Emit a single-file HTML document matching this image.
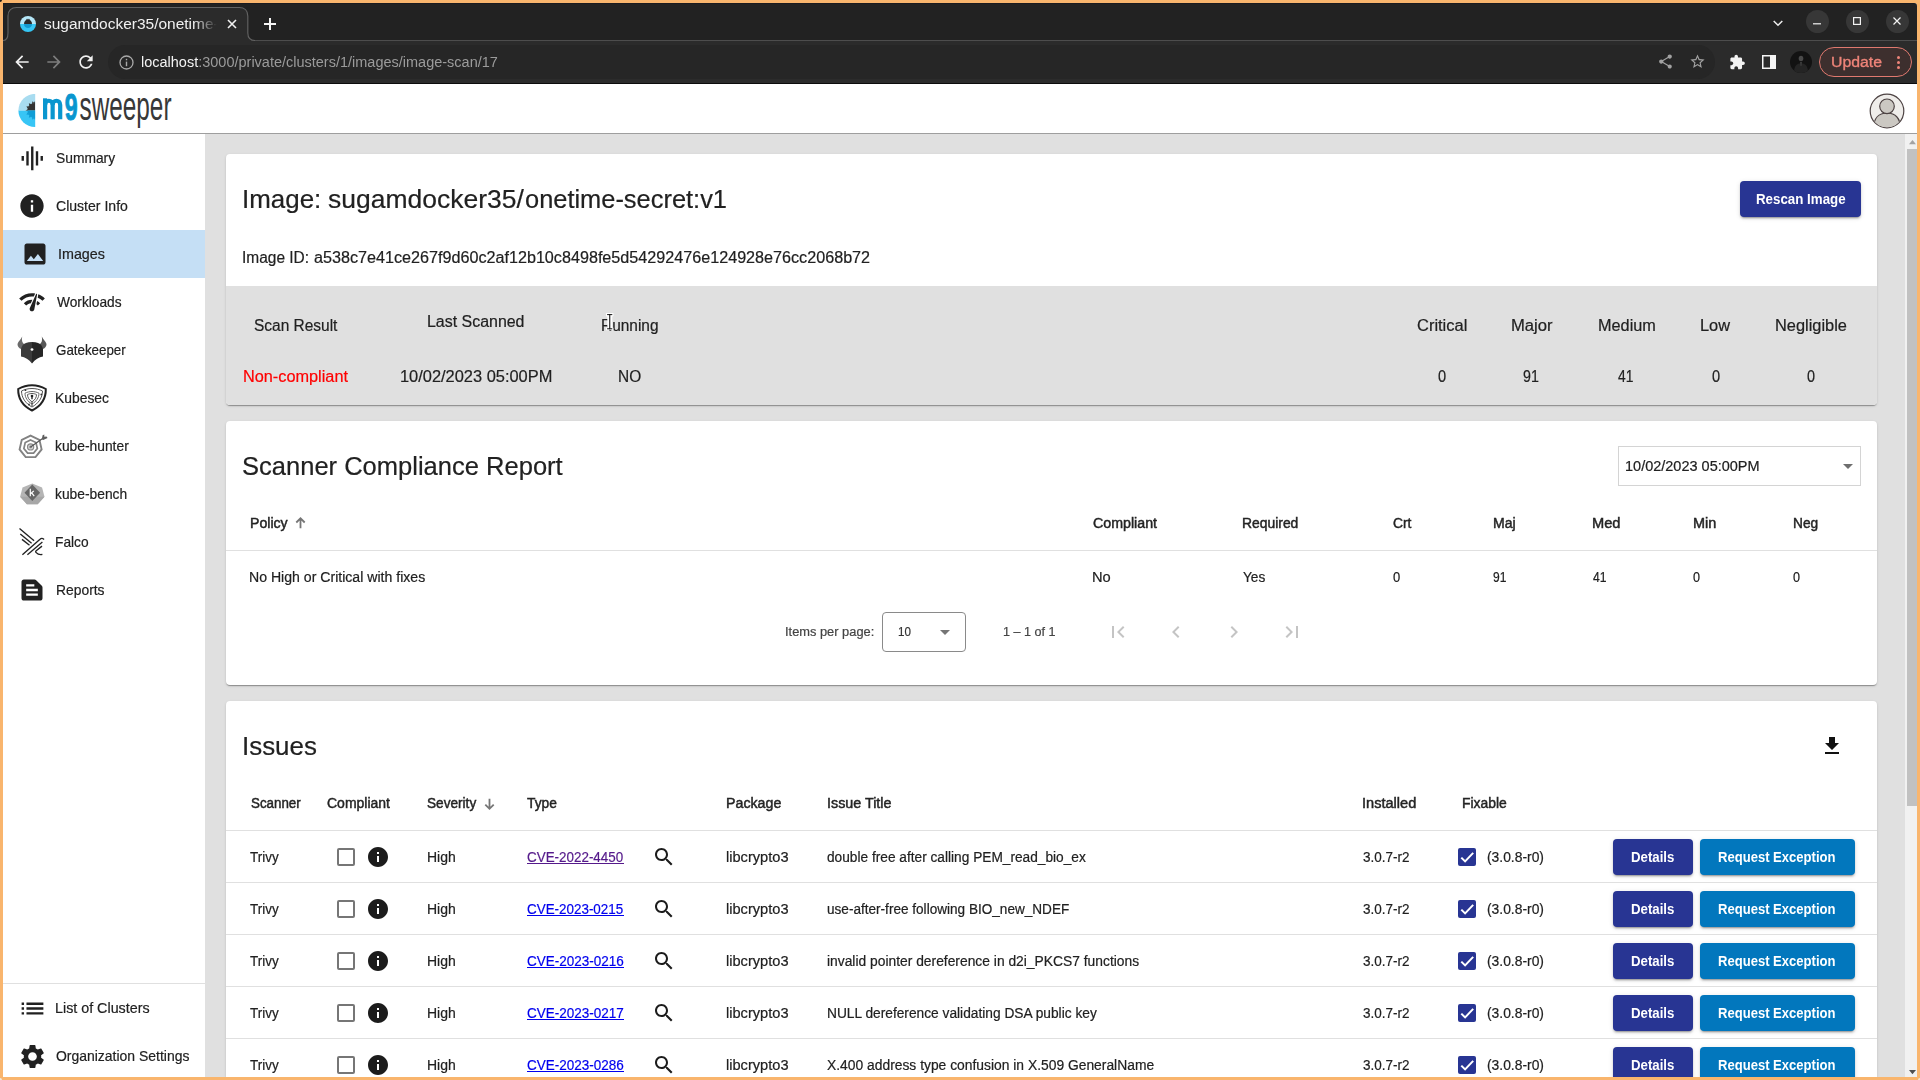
<!DOCTYPE html>
<html><head><meta charset="utf-8"><title>sugamdocker35/onetime-secret:v1</title><style>
html,body{margin:0;padding:0;width:1920px;height:1080px;overflow:hidden;background:#fff;font-family:"Liberation Sans",sans-serif;}
.b{position:absolute;box-sizing:border-box;}
.t{position:absolute;white-space:pre;font-family:"Liberation Sans",sans-serif;}
svg{overflow:visible;}
</style></head><body>
<div class="b" style="left:0px;top:0px;width:1920px;height:1080px;background:#f9b56d;"></div>
<div class="b" style="left:3px;top:3px;width:1914px;height:1074px;background:#fff;border-radius:0 3px 0 0;"></div>
<div class="b" style="left:0px;top:0px;width:2px;height:2px;background:#1a1a1a;border-radius:0 0 2px 0;"></div>
<div class="b" style="left:0px;top:1078px;width:2px;height:2px;background:#efe6dc;border-radius:0 2px 0 0;"></div>
<div class="b" style="left:1918px;top:1078px;width:2px;height:2px;background:#efe6dc;border-radius:2px 0 0 0;"></div>
<div class="b" style="left:3px;top:3px;width:1914px;height:38px;background:#222222;border-radius:0 3px 0 0;border-top:1px solid #1b1b1f;"></div>
<div class="b" style="left:3px;top:3px;width:1px;height:81px;background:#1d1d22;"></div>
<div class="b" style="left:3px;top:40px;width:1914px;height:44px;background:#2b2b2b;border-top:1px solid #4d4d4d;border-bottom:1px solid #0c0c0c;"></div>
<svg class="b" style="left:3px;top:7px;" width="253" height="36" viewBox="0 0 253 36"><path d="M0 34 C3.500 34 5.500 31 5.500 26 L5.500 9 C5.500 3.500 8.500 1 13.500 1 L236.300 1 C241.300 1 244.300 3.500 244.300 9 L244.300 26 C244.300 31 246.500 34 252 34 L252 35 L0 35 Z" fill="#2b2b2b"/>
<path d="M0 33.500 C3.500 33.500 5 30.500 5 26 L5 9 C5 3.500 8.500 .5 13.500 .5 L236.300 .5 C241.300 .5 244.800 3.500 244.800 9 L244.800 26 C244.800 30.500 246.500 33.500 252 33.500" fill="none" stroke="#636363" stroke-width="1.150"/></svg>
<svg class="b" style="left:20px;top:16px;" width="16" height="16" viewBox="0 0 16 16"><defs><clipPath id="fc"><circle cx="8" cy="8" r="8"/></clipPath></defs>
<g clip-path="url(#fc)"><rect width="16" height="8" fill="#b5e6f7"/><rect y="8" width="16" height="8" fill="#35c6f4"/>
<path d="M4 8 C4 5.500 5.500 4.200 6.500 4 L6 2.800 L7.300 3.600 L8 2.500 L8.700 3.600 L10 2.800 L9.500 4 C10.500 4.200 12 5.500 12 8 Z" fill="#2a2a2a"/>
<path d="M4 8 C4 10.500 6 12 8 12 C10 12 12 10.500 12 8 Z" fill="#159ad0"/></g></svg>
<span class="t" style="left:44.30px;top:16px;font-size:15.5px;line-height:15.5px;color:#f1f1f1;transform:scaleX(0.9988);transform-origin:0 0;width:174px;overflow:hidden;-webkit-mask-image:linear-gradient(90deg,#000 0,#000 150px,transparent 173px);mask-image:linear-gradient(90deg,#000 0,#000 150px,transparent 173px);">sugamdocker35/onetime-</span>
<svg class="b" style="left:227px;top:19px;" width="10" height="10" viewBox="0 0 10 10"><path d="M1 1 L9 9 M9 1 L1 9" stroke="#f1f1f1" stroke-width="1.600" fill="none"/></svg>
<svg class="b" style="left:264px;top:18px;" width="12" height="12" viewBox="0 0 12 12"><path d="M6 0 V12 M0 6 H12" stroke="#f5f5f5" stroke-width="2" fill="none"/></svg>
<svg class="b" style="left:1773px;top:20px;" width="10" height="7" viewBox="0 0 10 7"><path d="M.7 1 L5 5.300 L9.300 1" stroke="#eee" stroke-width="1.500" fill="none"/></svg>
<div class="b" style="left:1805.5px;top:9.7px;width:23px;height:23px;background:#373737;border-radius:50%;"></div>
<div class="b" style="left:1845.5px;top:9.7px;width:23px;height:23px;background:#373737;border-radius:50%;"></div>
<div class="b" style="left:1885.5px;top:9.7px;width:23px;height:23px;background:#373737;border-radius:50%;"></div>
<svg class="b" style="left:1813px;top:23px;" width="8" height="2" viewBox="0 0 8 2"><rect width="8" height="1.200" y=".2" fill="#f2f2f2"/></svg>
<svg class="b" style="left:1853px;top:17px;" width="8" height="8" viewBox="0 0 8 8"><rect x=".6" y=".6" width="6.800" height="6.800" fill="none" stroke="#f2f2f2" stroke-width="1.200"/></svg>
<svg class="b" style="left:1893px;top:17px;" width="8" height="8" viewBox="0 0 8 8"><path d="M.5 .5 L7.500 7.500 M7.500 .5 L.5 7.500" stroke="#f2f2f2" stroke-width="1.200" fill="none"/></svg>
<svg class="b" style="left:12px;top:52px;" width="20" height="20" viewBox="0 0 24 24"><path fill="#f1f1f1" d="M20 11H7.830l5.590-5.590L12 4l-8 8 8 8 1.410-1.410L7.830 13H20v-2z"/></svg>
<svg class="b" style="left:44px;top:52px;" width="20" height="20" viewBox="0 0 24 24"><path fill="#7d7d7d" d="M12 4l-1.410 1.410L16.170 11H4v2h12.170l-5.580 5.590L12 20l8-8z"/></svg>
<svg class="b" style="left:76px;top:52px;" width="20" height="20" viewBox="0 0 24 24"><path fill="#f1f1f1" d="M17.65 6.35C16.2 4.9 14.21 4 12 4c-4.420 0-7.990 3.580-7.990 8s3.570 8 7.990 8c3.730 0 6.840-2.550 7.730-6h-2.080c-.82 2.330-3.040 4-5.650 4-3.310 0-6-2.690-6-6s2.690-6 6-6c1.660 0 3.140.69 4.220 1.780L13 11h7V4l-2.350 2.350z"/></svg>
<div class="b" style="left:108px;top:45px;width:1607px;height:34px;background:#262626;border-radius:17px;"></div>
<svg class="b" style="left:118.5px;top:54.5px;" width="15" height="15" viewBox="0 0 15 15"><circle cx="7.500" cy="7.500" r="6.500" fill="none" stroke="#a9a9a9" stroke-width="1.300"/><rect x="6.800" y="6.600" width="1.400" height="4.600" fill="#a9a9a9"/><rect x="6.800" y="3.800" width="1.400" height="1.500" fill="#a9a9a9"/></svg>
<span class="t" style="left:141.30px;top:54px;font-size:15.5px;line-height:15.5px;color:#9b9b9b;transform:scaleX(0.9349);transform-origin:0 0;"><span style="color:#f4f4f4">localhost</span>:3000/private/clusters/1/images/image-scan/17</span>
<svg class="b" style="left:1656.8px;top:53px;" width="17" height="17" viewBox="0 0 24 24"><path fill="#a2a2a2" d="M18 16.08c-.76 0-1.440.3-1.960.77L8.910 12.700c.05-.23.09-.46.09-.7s-.04-.47-.09-.7l7.050-4.110c.54.5 1.250.81 2.040.81 1.660 0 3-1.340 3-3s-1.340-3-3-3-3 1.340-3 3c0 .24.04.47.09.7L8.040 9.810C7.500 9.310 6.790 9 6 9c-1.660 0-3 1.340-3 3s1.340 3 3 3c.79 0 1.500-.31 2.040-.81l7.120 4.160c-.05.21-.08.43-.08.65 0 1.610 1.310 2.920 2.920 2.920 1.610 0 2.920-1.310 2.920-2.920s-1.310-2.920-2.920-2.920z"/></svg>
<svg class="b" style="left:1688.5px;top:52.8px;" width="17" height="17" viewBox="0 0 24 24"><path fill="#a2a2a2" d="M22 9.24l-7.190-.62L12 2 9.190 8.630 2 9.240l5.460 4.730L5.820 21 12 17.270 18.180 21l-1.630-7.030L22 9.240zM12 15.400l-3.760 2.270 1-4.280-3.320-2.880 4.380-.38L12 6.100l1.710 4.040 4.380.38-3.320 2.880 1 4.280L12 15.400z"/></svg>
<svg class="b" style="left:1729.05px;top:54.15px;" width="16.5" height="16.5" viewBox="0 0 24 24"><path fill="#f3f3f3" d="M20.5 11H19V7c0-1.100-.9-2-2-2h-4V3.500C13 2.120 11.880 1 10.500 1S8 2.120 8 3.500V5H4c-1.100 0-1.990.9-1.990 2v3.800H3.500c1.490 0 2.700 1.210 2.700 2.700s-1.210 2.700-2.700 2.700H2V20c0 1.100.9 2 2 2h3.800v-1.500c0-1.490 1.210-2.700 2.700-2.700 1.490 0 2.700 1.210 2.700 2.700V22H17c1.100 0 2-.9 2-2v-4h1.500c1.380 0 2.500-1.120 2.500-2.500S21.880 11 20.500 11z"/></svg>
<svg class="b" style="left:1762px;top:55px;" width="14" height="14" viewBox="0 0 14 14"><rect x=".75" y=".75" width="12.500" height="12.500" fill="#2b2b2b" stroke="#f5f5f5" stroke-width="1.500"/><rect x="8" y="0" width="6" height="14" fill="#f5f5f5"/></svg>
<svg class="b" style="left:1790px;top:51px;" width="22" height="22" viewBox="0 0 22 22"><defs><clipPath id="ac"><circle cx="11" cy="11" r="11"/></clipPath></defs><g clip-path="url(#ac)"><rect width="22" height="22" fill="#121212"/>
<ellipse cx="11" cy="7.500" rx="2.300" ry="2.800" fill="#4a4a4a"/><path d="M4 22 C4 14 7 12.500 11 12.500 C15 12.500 18 14 18 22 Z" fill="#242424"/><path d="M10 11 L12 11 L11.500 15 L10.500 15 Z" fill="#3c3c3c"/></g></svg>
<div class="b" style="left:1819px;top:47px;width:93px;height:30px;background:#3d2f2e;border:1px solid #e0796f;border-radius:15px;"></div>
<span class="t" style="left:1831.30px;top:54px;font-size:15.5px;line-height:15.5px;color:#ee8479;transform:scaleX(1.0206);transform-origin:0 0;-webkit-text-stroke:0.35px #ee8479;">Update</span>
<div class="b" style="left:1896.8px;top:56px;width:3px;height:3px;background:#ee8479;border-radius:50%;"></div>
<div class="b" style="left:1896.8px;top:61px;width:3px;height:3px;background:#ee8479;border-radius:50%;"></div>
<div class="b" style="left:1896.8px;top:66px;width:3px;height:3px;background:#ee8479;border-radius:50%;"></div>
<div class="b" style="left:3px;top:84px;width:1914px;height:50px;background:#fff;border-bottom:1px solid #9e9e9e;"></div>
<svg class="b" style="left:18px;top:93.5px;" width="18" height="34" viewBox="0 0 18 34"><defs><clipPath id="lc"><circle cx="17" cy="16.500" r="16.600"/></clipPath><clipPath id="lh"><rect x="0" y="0" width="17.200" height="34"/></clipPath>
<clipPath id="lt"><rect x="0" y="0" width="17.200" height="16.600"/></clipPath><clipPath id="lb"><rect x="0" y="16.600" width="17.200" height="18"/></clipPath></defs>
<g clip-path="url(#lh)"><g clip-path="url(#lc)">
<rect x="0" y="0" width="18" height="16.600" fill="#a8dcf0"/>
<rect x="0" y="16.600" width="18" height="18" fill="#37c5f5"/>
</g>
<g clip-path="url(#lt)"><circle cx="17" cy="16.500" r="7.600" fill="#333"/><path d="M9.93 17.87 L7.40 16.50 L9.93 15.13 Z M10.01 14.76 L8.30 12.44 L11.18 12.27 Z M11.40 11.97 L10.83 9.15 L13.51 10.20 Z M13.84 10.03 L14.52 7.23 L16.50 9.32 Z M15.63 9.43 L17.00 6.90 L18.37 9.43 Z " fill="#333"/></g>
<g clip-path="url(#lb)"><circle cx="17" cy="16.500" r="7.600" fill="#0f9dd6"/><path d="M11.18 20.73 L8.30 20.56 L10.01 18.24 Z M13.51 22.80 L10.83 23.85 L11.40 21.03 Z M16.50 23.68 L14.52 25.77 L13.84 22.97 Z M18.37 23.57 L17.00 26.10 L15.63 23.57 Z " fill="#0f9dd6"/></g>
</g></svg>
<svg class="b" style="left:42.8px;top:86px;" width="130" height="48" viewBox="0 0 130 48"><g fill="none" stroke="#0996cf" stroke-width="4.200"><path d="M2.100 33.300 V12.300"/><path d="M2.100 19 C2.100 13.300 9.650 13.300 9.650 19 V33.300"/><path d="M9.650 19 C9.650 13.300 17.200 13.300 17.200 19 V33.300"/></g>
<text x="21.700" y="33.700" font-family="Liberation Sans, sans-serif" font-weight="700" font-size="36.500" fill="#0996cf" stroke="#0996cf" stroke-width=".9" textLength="12.900" lengthAdjust="spacingAndGlyphs">9</text>
<text x="36.500" y="33.600" font-family="Liberation Sans, sans-serif" font-size="39.800" fill="#383838" textLength="92" lengthAdjust="spacingAndGlyphs">sweeper</text></svg>
<svg class="b" style="left:1868.7px;top:92.65px;" width="36" height="36" viewBox="0 0 36 36"><circle cx="18" cy="18" r="16.800" fill="#efedea" stroke="#4d4343" stroke-width="1.200"/>
<defs><clipPath id="uc"><circle cx="18" cy="18" r="16.200"/></clipPath></defs>
<g clip-path="url(#uc)"><path d="M4.500 36 C4.500 25 10 20 18 20 C26 20 31.500 25 31.500 36 Z" fill="#cbc8c2" stroke="#4d4343" stroke-width="1.200"/>
<circle cx="18" cy="13.300" r="7.300" fill="#cbc8c2" stroke="#4d4343" stroke-width="1.200"/></g></svg>
<div class="b" style="left:205px;top:134px;width:1700px;height:943px;background:#e0e0e0;"></div>
<div class="b" style="left:3px;top:134px;width:202px;height:943px;background:#fff;"></div>
<div class="b" style="left:3px;top:230px;width:202px;height:48px;background:#c5dff5;"></div>
<div class="b" style="left:3px;top:983px;width:202px;height:1px;background:#e0e0e0;"></div>
<span class="t" style="left:56.11px;top:150px;font-size:15px;line-height:15px;color:#212121;transform:scaleX(0.9209);transform-origin:0 0;-webkit-text-stroke:0.2px #212121;">Summary</span>
<span class="t" style="left:55.57px;top:198px;font-size:15px;line-height:15px;color:#212121;transform:scaleX(0.9367);transform-origin:0 0;-webkit-text-stroke:0.2px #212121;">Cluster Info</span>
<span class="t" style="left:58.44px;top:246px;font-size:15px;line-height:15px;color:#212121;transform:scaleX(0.9539);transform-origin:0 0;-webkit-text-stroke:0.2px #212121;">Images</span>
<span class="t" style="left:56.70px;top:294px;font-size:15px;line-height:15px;color:#212121;transform:scaleX(0.9153);transform-origin:0 0;-webkit-text-stroke:0.2px #212121;">Workloads</span>
<span class="t" style="left:56.10px;top:342px;font-size:15px;line-height:15px;color:#212121;transform:scaleX(0.8893);transform-origin:0 0;-webkit-text-stroke:0.2px #212121;">Gatekeeper</span>
<span class="t" style="left:55.38px;top:390px;font-size:15px;line-height:15px;color:#212121;transform:scaleX(0.9253);transform-origin:0 0;-webkit-text-stroke:0.2px #212121;">Kubesec</span>
<span class="t" style="left:54.66px;top:438px;font-size:15px;line-height:15px;color:#212121;transform:scaleX(0.9210);transform-origin:0 0;-webkit-text-stroke:0.2px #212121;">kube-hunter</span>
<span class="t" style="left:54.66px;top:486px;font-size:15px;line-height:15px;color:#212121;transform:scaleX(0.9204);transform-origin:0 0;-webkit-text-stroke:0.2px #212121;">kube-bench</span>
<span class="t" style="left:55.38px;top:534px;font-size:15px;line-height:15px;color:#212121;transform:scaleX(0.9154);transform-origin:0 0;-webkit-text-stroke:0.2px #212121;">Falco</span>
<span class="t" style="left:55.66px;top:582px;font-size:15px;line-height:15px;color:#212121;transform:scaleX(0.9239);transform-origin:0 0;-webkit-text-stroke:0.2px #212121;">Reports</span>
<span class="t" style="left:55.48px;top:1000px;font-size:15px;line-height:15px;color:#212121;transform:scaleX(0.9533);transform-origin:0 0;-webkit-text-stroke:0.2px #212121;">List of Clusters</span>
<span class="t" style="left:55.81px;top:1048px;font-size:15px;line-height:15px;color:#212121;transform:scaleX(0.9300);transform-origin:0 0;-webkit-text-stroke:0.2px #212121;">Organization Settings</span>
<svg class="b" style="left:17.75px;top:143.75px;" width="28.5" height="28.5" viewBox="0 0 24 24"><path fill="#212121" d="M7 18h2V6H7v12zm4 4h2V2h-2v20zm-8-8h2v-4H3v4zm12 4h2V6h-2v12zm4-8v4h2v-4h-2z"/></svg>
<svg class="b" style="left:18px;top:192px;" width="28" height="28" viewBox="0 0 24 24"><path fill="#212121" d="M12 2C6.48 2 2 6.48 2 12s4.48 10 10 10 10-4.48 10-10S17.52 2 12 2zm1 15h-2v-6h2v6zm0-8h-2V7h2v2z"/></svg>
<svg class="b" style="left:21px;top:240px;" width="28" height="28" viewBox="0 0 24 24"><path fill="#212121" d="M21 19V5c0-1.1-.9-2-2-2H5c-1.1 0-2 .9-2 2v14c0 1.1.9 2 2 2h14c1.1 0 2-.9 2-2zM8.5 13.5l2.5 3.01L14.5 12l4.5 6H5l3.500-4.500z"/></svg>
<svg class="b" style="left:18px;top:288px;" width="28" height="28" viewBox="0 0 24 24"><path fill="#212121" d="M15.9 5c-.17 0-.32.09-.41.23l-.07.15-5.18 11.650c-.16.29-.26.61-.26.96 0 1.110.9 2.010 2.010 2.010.96 0 1.770-.68 1.960-1.590l.01-.03L16.400 5.500c0-.28-.22-.5-.5-.5zM1 9l2 2c2.880-2.880 6.790-4.080 10.530-3.620l1.190-2.680C9.890 3.840 4.740 5.270 1 9zm20 2l2-2c-1.640-1.640-3.550-2.820-5.590-3.570l-.53 2.820c1.500.62 2.900 1.530 4.120 2.750zm-4 4l2-2c-.8-.8-1.700-1.420-2.660-1.890l-.55 2.920c.42.27.83.59 1.210.97zM5 13l2 2c1.130-1.130 2.560-1.790 4.030-2l1.280-2.880c-2.630-.08-5.300.87-7.310 2.880z"/></svg>
<svg class="b" style="left:18px;top:576px;" width="28" height="28" viewBox="0 0 24 24"><path fill="#212121" d="M20.41 8.41l-4.830-4.830c-.37-.37-.88-.58-1.410-.58H5c-1.100 0-2 .9-2 2v14c0 1.100.9 2 2 2h14c1.100 0 2-.9 2-2V9.830c0-.53-.21-1.040-.59-1.420zM7 7h7v2H7V7zm10 10H7v-2h10v2zm0-4H7v-2h10v2z"/></svg>
<svg class="b" style="left:17.5px;top:993.5px;" width="29" height="29" viewBox="0 0 24 24"><path fill="#212121" d="M3 13h2v-2H3v2zm0 4h2v-2H3v2zm0-8h2V7H3v2zm4 4h14v-2H7v2zm0 4h14v-2H7v2zM7 7v2h14V7H7z"/></svg>
<svg class="b" style="left:17.5px;top:1041.5px;" width="29" height="29" viewBox="0 0 24 24"><path fill="#212121" d="M19.14 12.94c.04-.3.06-.61.06-.94 0-.32-.02-.64-.07-.94l2.03-1.58c.18-.14.23-.41.12-.61l-1.92-3.32c-.12-.22-.37-.29-.59-.22l-2.39.96c-.5-.38-1.03-.7-1.62-.94l-.36-2.54c-.04-.24-.24-.41-.48-.41h-3.84c-.24 0-.43.17-.47.41l-.36 2.54c-.59.24-1.13.57-1.62.94l-2.39-.96c-.22-.08-.47 0-.59.22L2.74 8.87c-.12.21-.08.47.12.61l2.03 1.58c-.05.3-.09.63-.09.94s.02.64.07.94l-2.03 1.58c-.18.14-.23.41-.12.61l1.920 3.320c.12.22.37.29.59.22l2.390-.96c.5.38 1.030.7 1.620.94l.36 2.540c.05.24.24.41.48.41h3.840c.24 0 .44-.17.47-.41l.36-2.540c.59-.24 1.130-.56 1.620-.94l2.390.96c.22.08.47 0 .59-.22l1.920-3.320c.12-.22.07-.47-.12-.61l-2.010-1.580zM12 15.600c-1.980 0-3.600-1.620-3.600-3.600s1.620-3.600 3.600-3.600 3.600 1.620 3.600 3.600-1.620 3.600-3.600 3.600z"/></svg>
<svg class="b" style="left:17px;top:336px;" width="30" height="28" viewBox="0 0 30 28"><path d="M5.200 0.500 C3.500 4 1.500 5 .5 8 C.3 10 2 12.500 4 13 L7.500 8.500 C5 7 4.500 4 5.200 0.500 Z" fill="#6a6a6a"/>
<path d="M24.800 0.500 C26.500 4 28.500 5 29.500 8 C29.700 10 28 12.500 26 13 L22.500 8.500 C25 7 25.500 4 24.800 0.500 Z" fill="#585858"/>
<path d="M15 6 C10 6 7 7.500 5.500 9.500 L4 12.500 L4 20.500 C8 21 12 23.500 15 27.500 Z" fill="#3b3b3b"/>
<path d="M15 6 C20 6 23 7.500 24.500 9.500 L26 12.500 L26 20.500 C22 21 18 23.500 15 27.500 Z" fill="#262626"/>
<ellipse cx="15" cy="13.500" rx="1.400" ry="1.200" fill="#fff"/></svg>
<svg class="b" style="left:17px;top:383.7px;" width="30" height="28" viewBox="0 0 30 28"><path d="M15 1.200 C20 1.200 25 2.800 28.800 5 C29 14 24 22 15 26.500 C6 22 1 14 1.200 5 C5 2.800 10 1.200 15 1.200 Z" fill="#fff" stroke="#222" stroke-width="2"/>
<path d="M15 4.500 C19 4.500 22.500 5.500 25.500 7 C25.500 13.500 21.500 19.500 15 23 C8.500 19.500 4.500 13.500 4.500 7 C7.500 5.500 11 4.500 15 4.500 Z" fill="none" stroke="#555" stroke-width="1"/>
<path d="M15 7.500 C17.500 7.500 20 8.200 22 9.200 C22 13.500 19.500 17.500 15 20 C10.500 17.500 8 13.500 8 9.200 C10 8.200 12.500 7.500 15 7.500 Z" fill="none" stroke="#666" stroke-width="1"/>
<path d="M15 9.500 C16.500 9.500 18.500 10 19.500 10.600 C19.500 13.500 18 16 15 17.800 C12 16 10.500 13.500 10.500 10.600 C11.500 10 13.500 9.500 15 9.500 Z" fill="#fff" stroke="#444" stroke-width=".9"/>
<circle cx="15" cy="12" r="1.300" fill="#222"/><rect x="14.300" y="12" width="1.400" height="3.300" rx=".6" fill="#222"/>
<circle cx="8.500" cy="6.200" r=".9" fill="#333"/><circle cx="24.300" cy="10.500" r=".9" fill="#333"/><circle cx="12" cy="20.500" r=".9" fill="#333"/>
<path d="M15 18 V22" stroke="#333" stroke-width="1"/></svg>
<svg class="b" style="left:17.7px;top:431.6px;" width="30" height="28" viewBox="0 0 30 28"><polygon points="12.60,3.60 21.43,7.85 23.62,17.41 17.50,25.08 7.70,25.08 1.58,17.41 3.77,7.85" fill="none" stroke="#828282" stroke-width="1.900"/><polygon points="12.60,8.00 17.99,10.60 19.33,16.44 15.59,21.12 9.61,21.12 5.87,16.44 7.21,10.60" fill="none" stroke="#828282" stroke-width="1.700"/><circle cx="12.600" cy="14.900" r="3.100" fill="#d6d6d6" stroke="#8a8a8a" stroke-width="1.200"/><circle cx="12.600" cy="14.900" r="1.300" fill="#808080"/><path d="M12.600 14.900 L26 5.500" stroke="#555" stroke-width="1.200"/><path d="M23.800 7.200 L24.600 3.200 L26.300 2.600 L26.300 4.800 L28.500 4.500 L29.600 6 L25.200 8 Z" fill="#5e5e5e"/></svg>
<svg class="b" style="left:19.7px;top:482.5px;" width="25" height="23" viewBox="0 0 25 23"><polygon points="12.30,0.40 22.07,4.54 24.49,13.85 17.72,21.31 6.88,21.31 0.11,13.85 2.53,4.54" fill="#b5b5b5"/><polygon points="24.49,13.85 17.72,21.31 6.88,21.31 0.11,13.85" fill="#a7a7a7"/><path d="M12.300 1.600 L20.100 9.700 L12.300 17.900 L4.500 9.700 Z" fill="#666"/><path d="M10.300 5.800 V13.200 M10.300 11 L13.800 7.900 M11.700 9.800 L14.200 13.200" stroke="#fff" stroke-width="1.200" fill="none"/></svg>
<svg class="b" style="left:0px;top:0px;" width="60" height="600" viewBox="0 0 60 600"><g stroke="#222" stroke-width="1.350" fill="none" stroke-linecap="butt">
<path d="M19.500 528.600 L34.100 540.700"/><path d="M20.300 534 L31.600 543.200"/><path d="M22 539.400 L29.500 545.300"/>
<path d="M22.400 554.700 L40 539.200 C41 538.200 42.500 538 44.100 539.400"/><path d="M27.400 554.700 L42.400 541.900"/>
<path d="M42 546.100 L36.200 550.700 C35.500 551.300 35.500 552 36.200 552.600 C37.500 554 39.500 555 42.400 554.400"/></g></svg>
<div class="b" style="left:1905px;top:134px;width:12px;height:943px;background:#f1f1f1;"></div>
<div class="b" style="left:1907px;top:149px;width:10px;height:657px;background:#c1c1c1;"></div>
<svg class="b" style="left:1909px;top:139.8px;" width="7" height="4.2" viewBox="0 0 7 4.2"><path d="M0 4.200 L3.500 0 L7 4.200 Z" fill="#a3a3a3"/></svg>
<svg class="b" style="left:1909px;top:1069.8px;" width="7" height="4.2" viewBox="0 0 7 4.2"><path d="M0 0 L3.500 4.200 L7 0 Z" fill="#505050"/></svg>
<div class="b" style="left:226px;top:154px;width:1651px;height:251px;background:#fff;border-radius:4px;box-shadow:0 2px 1px -1px rgba(0,0,0,.2),0 1px 1px 0 rgba(0,0,0,.14),0 1px 3px 0 rgba(0,0,0,.12);"></div>
<div class="b" style="left:226px;top:286px;width:1651px;height:119px;background:#e0e0e0;border-radius:0 0 4px 4px;"></div>
<span class="t" style="left:242.22px;top:186px;font-size:26px;line-height:26px;color:#212121;transform:scaleX(0.9971);transform-origin:0 0;-webkit-text-stroke:0.2px #212121;">Image:</span>
<span class="t" style="left:328.10px;top:186px;font-size:26px;line-height:26px;color:#212121;transform:scaleX(1.0189);transform-origin:0 0;-webkit-text-stroke:0.2px #212121;">sugamdocker35/</span>
<span class="t" style="left:525.20px;top:186px;font-size:26px;line-height:26px;color:#212121;transform:scaleX(0.9774);transform-origin:0 0;-webkit-text-stroke:0.2px #212121;">onetime-secret:v1</span>
<span class="t" style="left:242.29px;top:250px;font-size:16px;line-height:16px;color:#212121;transform:scaleX(0.9667);transform-origin:0 0;-webkit-text-stroke:0.2px #212121;">Image ID:</span>
<span class="t" style="left:313.90px;top:250px;font-size:16px;line-height:16px;color:#212121;transform:scaleX(1.0097);transform-origin:0 0;-webkit-text-stroke:0.2px #212121;">a538c7e41ce267f9d60c2af12b10c8498fe5d54292476e124928e76cc2068b72</span>
<div class="b" style="left:1740px;top:181px;width:121px;height:36px;background:#283593;border-radius:4px;box-shadow:0 3px 1px -2px rgba(0,0,0,.2),0 2px 2px 0 rgba(0,0,0,.14),0 1px 5px 0 rgba(0,0,0,.12);"></div>
<span class="t" style="left:1756.40px;top:191px;font-size:15px;line-height:15px;color:#fff;font-weight:700;transform:scaleX(0.8880);transform-origin:0 0;">Rescan Image</span>
<span class="t" style="left:254.30px;top:318px;font-size:16px;line-height:16px;color:#212121;transform:scaleX(0.9666);transform-origin:0 0;-webkit-text-stroke:0.2px #212121;">Scan Result</span>
<span class="t" style="left:427.26px;top:314px;font-size:16px;line-height:16px;color:#212121;transform:scaleX(0.9963);transform-origin:0 0;-webkit-text-stroke:0.2px #212121;">Last Scanned</span>
<span class="t" style="left:600.83px;top:318px;font-size:16px;line-height:16px;color:#212121;transform:scaleX(0.9643);transform-origin:0 0;-webkit-text-stroke:0.2px #212121;">Running</span>
<span class="t" style="left:1417.01px;top:318px;font-size:16px;line-height:16px;color:#212121;transform:scaleX(1.0296);transform-origin:0 0;-webkit-text-stroke:0.2px #212121;">Critical</span>
<span class="t" style="left:1511.21px;top:318px;font-size:16px;line-height:16px;color:#212121;transform:scaleX(1.0397);transform-origin:0 0;-webkit-text-stroke:0.2px #212121;">Major</span>
<span class="t" style="left:1597.76px;top:318px;font-size:16px;line-height:16px;color:#212121;transform:scaleX(1.0161);transform-origin:0 0;-webkit-text-stroke:0.2px #212121;">Medium</span>
<span class="t" style="left:1700.25px;top:318px;font-size:16px;line-height:16px;color:#212121;transform:scaleX(1.0221);transform-origin:0 0;-webkit-text-stroke:0.2px #212121;">Low</span>
<span class="t" style="left:1775.23px;top:318px;font-size:16px;line-height:16px;color:#212121;transform:scaleX(1.0229);transform-origin:0 0;-webkit-text-stroke:0.2px #212121;">Negligible</span>
<span class="t" style="left:243.00px;top:369px;font-size:16px;line-height:16px;color:#ff0000;transform:scaleX(1.0178);transform-origin:0 0;-webkit-text-stroke:0.2px #ff0000;">Non-compliant</span>
<span class="t" style="left:400.20px;top:369px;font-size:16px;line-height:16px;color:#212121;transform:scaleX(1.0253);transform-origin:0 0;-webkit-text-stroke:0.2px #212121;">10/02/2023 05:00PM</span>
<span class="t" style="left:618.48px;top:369px;font-size:16px;line-height:16px;color:#212121;transform:scaleX(0.9650);transform-origin:0 0;-webkit-text-stroke:0.2px #212121;">NO</span>
<span class="t" style="left:1437.90px;top:369px;font-size:16px;line-height:16px;color:#212121;transform:scaleX(0.9122);transform-origin:0 0;-webkit-text-stroke:0.2px #212121;">0</span>
<span class="t" style="left:1523.17px;top:369px;font-size:16px;line-height:16px;color:#212121;transform:scaleX(0.8892);transform-origin:0 0;-webkit-text-stroke:0.2px #212121;">91</span>
<span class="t" style="left:1618.10px;top:369px;font-size:16px;line-height:16px;color:#212121;transform:scaleX(0.8652);transform-origin:0 0;-webkit-text-stroke:0.2px #212121;">41</span>
<span class="t" style="left:1711.90px;top:369px;font-size:16px;line-height:16px;color:#212121;transform:scaleX(0.9122);transform-origin:0 0;-webkit-text-stroke:0.2px #212121;">0</span>
<span class="t" style="left:1807.30px;top:369px;font-size:16px;line-height:16px;color:#212121;transform:scaleX(0.9009);transform-origin:0 0;-webkit-text-stroke:0.2px #212121;">0</span>
<svg class="b" style="left:605.8px;top:312.9px;" width="7.4" height="17.3" viewBox="0 0 7.4 17.3"><g fill="#fff"><rect x="0" y="0" width="7.400" height="3.400" rx=".6"/><rect x="1.300" y="3" width="5" height="12" /><rect x="0" y="14.500" width="7.400" height="2.800" rx=".6"/></g><g fill="#151515"><rect x="1.100" y="1.100" width="5.200" height="1"/><rect x="3.200" y="1.100" width="1.100" height="15.200"/><rect x="1.100" y="15.300" width="5.200" height="1"/></g></svg>
<div class="b" style="left:226px;top:421px;width:1651px;height:264px;background:#fff;border-radius:4px;box-shadow:0 2px 1px -1px rgba(0,0,0,.2),0 1px 1px 0 rgba(0,0,0,.14),0 1px 3px 0 rgba(0,0,0,.12);"></div>
<span class="t" style="left:242.39px;top:453px;font-size:26px;line-height:26px;color:#212121;transform:scaleX(0.9819);transform-origin:0 0;-webkit-text-stroke:0.2px #212121;">Scanner Compliance Report</span>
<div class="b" style="left:1618px;top:446px;width:243px;height:40px;background:#fff;border:1px solid #d4d4d4;"></div>
<span class="t" style="left:1625.20px;top:459px;font-size:14px;line-height:14px;color:#212121;transform:scaleX(1.0355);transform-origin:0 0;-webkit-text-stroke:0.2px #212121;">10/02/2023 05:00PM</span>
<svg class="b" style="left:1843px;top:464px;" width="10" height="5" viewBox="0 0 10 5"><path d="M0 0 L5 5 L10 0 Z" fill="#6e6e6e"/></svg>
<span class="t" style="left:249.84px;top:516px;font-size:14px;line-height:14px;color:#242424;transform:scaleX(1.0084);transform-origin:0 0;-webkit-text-stroke:0.45px #242424;">Policy</span>
<svg class="b" style="left:294.5px;top:516.5px;" width="11" height="12" viewBox="0 0 11 12"><path d="M5.500 1.300 V11.300 M1.300 5.500 L5.500 1.300 L9.700 5.500" stroke="#767676" stroke-width="1.800" fill="none"/></svg>
<span class="t" style="left:1093.10px;top:516px;font-size:14px;line-height:14px;color:#242424;transform:scaleX(1.0153);transform-origin:0 0;-webkit-text-stroke:0.45px #242424;">Compliant</span>
<span class="t" style="left:1242.30px;top:516px;font-size:14px;line-height:14px;color:#242424;transform:scaleX(0.9915);transform-origin:0 0;-webkit-text-stroke:0.45px #242424;">Required</span>
<span class="t" style="left:1393.10px;top:516px;font-size:14px;line-height:14px;color:#242424;transform:scaleX(0.9863);transform-origin:0 0;-webkit-text-stroke:0.45px #242424;">Crt</span>
<span class="t" style="left:1493.40px;top:516px;font-size:14px;line-height:14px;color:#242424;transform:scaleX(1.0049);transform-origin:0 0;-webkit-text-stroke:0.45px #242424;">Maj</span>
<span class="t" style="left:1592.30px;top:516px;font-size:14px;line-height:14px;color:#242424;transform:scaleX(1.0466);transform-origin:0 0;-webkit-text-stroke:0.45px #242424;">Med</span>
<span class="t" style="left:1693.30px;top:516px;font-size:14px;line-height:14px;color:#242424;transform:scaleX(1.0330);transform-origin:0 0;-webkit-text-stroke:0.45px #242424;">Min</span>
<span class="t" style="left:1793.30px;top:516px;font-size:14px;line-height:14px;color:#242424;transform:scaleX(0.9786);transform-origin:0 0;-webkit-text-stroke:0.45px #242424;">Neg</span>
<div class="b" style="left:226px;top:550px;width:1651px;height:1px;background:#e0e0e0;"></div>
<span class="t" style="left:249.30px;top:570px;font-size:14px;line-height:14px;color:#212121;transform:scaleX(1.0065);transform-origin:0 0;-webkit-text-stroke:0.2px #212121;">No High or Critical with fixes</span>
<span class="t" style="left:1092.30px;top:570px;font-size:14px;line-height:14px;color:#212121;transform:scaleX(1.0466);transform-origin:0 0;-webkit-text-stroke:0.2px #212121;">No</span>
<span class="t" style="left:1243.10px;top:570px;font-size:14px;line-height:14px;color:#212121;transform:scaleX(0.9775);transform-origin:0 0;-webkit-text-stroke:0.2px #212121;">Yes</span>
<span class="t" style="left:1393.10px;top:570px;font-size:14px;line-height:14px;color:#212121;transform:scaleX(0.9266);transform-origin:0 0;-webkit-text-stroke:0.2px #212121;">0</span>
<span class="t" style="left:1493.10px;top:570px;font-size:14px;line-height:14px;color:#212121;transform:scaleX(0.8604);transform-origin:0 0;-webkit-text-stroke:0.2px #212121;">91</span>
<span class="t" style="left:1593.10px;top:570px;font-size:14px;line-height:14px;color:#212121;transform:scaleX(0.8668);transform-origin:0 0;-webkit-text-stroke:0.2px #212121;">41</span>
<span class="t" style="left:1693.00px;top:570px;font-size:14px;line-height:14px;color:#212121;transform:scaleX(0.9009);transform-origin:0 0;-webkit-text-stroke:0.2px #212121;">0</span>
<span class="t" style="left:1793.00px;top:570px;font-size:14px;line-height:14px;color:#212121;transform:scaleX(0.9009);transform-origin:0 0;-webkit-text-stroke:0.2px #212121;">0</span>
<span class="t" style="left:785.20px;top:626px;font-size:12px;line-height:12px;color:#444;transform:scaleX(1.0702);transform-origin:0 0;-webkit-text-stroke:0.2px #444;">Items per page:</span>
<div class="b" style="left:882px;top:612px;width:84px;height:40px;background:#fff;border:1px solid #8a8a8a;border-radius:4px;"></div>
<span class="t" style="left:898.19px;top:626px;font-size:12px;line-height:12px;color:#333;transform:scaleX(0.9668);transform-origin:0 0;-webkit-text-stroke:0.2px #333;">10</span>
<svg class="b" style="left:940px;top:630px;" width="10" height="5" viewBox="0 0 10 5"><path d="M0 0 L5 5 L10 0 Z" fill="#757575"/></svg>
<span class="t" style="left:1003.30px;top:626px;font-size:12px;line-height:12px;color:#444;transform:scaleX(1.0472);transform-origin:0 0;-webkit-text-stroke:0.2px #444;">1 – 1 of 1</span>
<svg class="b" style="left:1106px;top:619.5px;" width="24" height="24" viewBox="0 0 24 24"><path fill="#c4c4c4" d="M18.41 16.59L13.82 12l4.590-4.590L17 6l-6 6 6 6zM6 6h2v12H6z"/></svg>
<svg class="b" style="left:1164px;top:619.5px;" width="24" height="24" viewBox="0 0 24 24"><path fill="#c4c4c4" d="M15.41 7.41L14 6l-6 6 6 6 1.410-1.410L10.830 12z"/></svg>
<svg class="b" style="left:1222px;top:619.5px;" width="24" height="24" viewBox="0 0 24 24"><path fill="#c4c4c4" d="M10 6L8.590 7.410 13.170 12l-4.580 4.590L10 18l6-6z"/></svg>
<svg class="b" style="left:1280px;top:619.5px;" width="24" height="24" viewBox="0 0 24 24"><path fill="#c4c4c4" d="M5.59 7.41L10.18 12l-4.590 4.590L7 18l6-6-6-6zM16 6h2v12h-2z"/></svg>
<div class="b" style="left:226px;top:701px;width:1651px;height:376px;background:#fff;border-radius:4px 4px 0 0;box-shadow:0 2px 1px -1px rgba(0,0,0,.2),0 1px 1px 0 rgba(0,0,0,.14),0 1px 3px 0 rgba(0,0,0,.12);"></div>
<span class="t" style="left:242.48px;top:733px;font-size:26px;line-height:26px;color:#212121;transform:scaleX(0.9958);transform-origin:0 0;-webkit-text-stroke:0.2px #212121;">Issues</span>
<svg class="b" style="left:1820px;top:734px;" width="24" height="24" viewBox="0 0 24 24"><path fill="#111" d="M19 9h-4V3H9v6H5l7 7 7-7zM5 18v2h14v-2H5z"/></svg>
<span class="t" style="left:250.60px;top:796px;font-size:14px;line-height:14px;color:#242424;transform:scaleX(0.9541);transform-origin:0 0;-webkit-text-stroke:0.45px #242424;">Scanner</span>
<span class="t" style="left:326.60px;top:796px;font-size:14px;line-height:14px;color:#242424;transform:scaleX(0.9988);transform-origin:0 0;-webkit-text-stroke:0.45px #242424;">Compliant</span>
<span class="t" style="left:427.40px;top:796px;font-size:14px;line-height:14px;color:#242424;transform:scaleX(0.9728);transform-origin:0 0;-webkit-text-stroke:0.45px #242424;">Severity</span>
<svg class="b" style="left:483.5px;top:797.5px;" width="11" height="12" viewBox="0 0 11 12"><path d="M5.500 .8 V10.800 M1.300 6.600 L5.500 10.800 L9.700 6.600" stroke="#767676" stroke-width="1.800" fill="none"/></svg>
<span class="t" style="left:527.30px;top:796px;font-size:14px;line-height:14px;color:#242424;transform:scaleX(0.9820);transform-origin:0 0;-webkit-text-stroke:0.45px #242424;">Type</span>
<span class="t" style="left:726.48px;top:796px;font-size:14px;line-height:14px;color:#242424;transform:scaleX(1.0151);transform-origin:0 0;-webkit-text-stroke:0.45px #242424;">Package</span>
<span class="t" style="left:826.66px;top:796px;font-size:14px;line-height:14px;color:#242424;transform:scaleX(1.0223);transform-origin:0 0;-webkit-text-stroke:0.45px #242424;">Issue Title</span>
<span class="t" style="left:1362.30px;top:796px;font-size:14px;line-height:14px;color:#242424;transform:scaleX(1.0416);transform-origin:0 0;-webkit-text-stroke:0.45px #242424;">Installed</span>
<span class="t" style="left:1462.30px;top:796px;font-size:14px;line-height:14px;color:#242424;transform:scaleX(0.9922);transform-origin:0 0;-webkit-text-stroke:0.45px #242424;">Fixable</span>
<div class="b" style="left:226px;top:830px;width:1651px;height:1px;background:#e0e0e0;"></div>
<span class="t" style="left:250.30px;top:850px;font-size:14px;line-height:14px;color:#212121;transform:scaleX(0.9624);transform-origin:0 0;-webkit-text-stroke:0.2px #212121;">Trivy</span>
<div class="b" style="left:337px;top:848px;width:18px;height:18px;border:2px solid #767676;border-radius:2px;background:#fff;"></div>
<svg class="b" style="left:366px;top:845px;" width="24" height="24" viewBox="0 0 24 24"><path fill="#1c1c1c" d="M12 2C6.48 2 2 6.48 2 12s4.48 10 10 10 10-4.48 10-10S17.52 2 12 2zm1 15h-2v-6h2v6zm0-8h-2V7h2v2z"/></svg>
<span class="t" style="left:426.66px;top:850px;font-size:14px;line-height:14px;color:#212121;transform:scaleX(0.9977);transform-origin:0 0;-webkit-text-stroke:0.2px #212121;">High</span>
<span class="t" style="left:527.30px;top:850px;font-size:14px;line-height:14px;color:#551a8b;transform:scaleX(0.9580);transform-origin:0 0;-webkit-text-stroke:0.2px #551a8b;">CVE-2022-4450</span>
<div class="b" style="left:527px;top:863px;width:96.5px;height:1px;background:#551a8b;"></div>
<svg class="b" style="left:652.3px;top:845px;" width="24" height="24" viewBox="0 0 24 24"><path fill="#1c1c1c" d="M15.5 14h-.79l-.28-.27C15.41 12.59 16 11.11 16 9.5 16 5.91 13.09 3 9.5 3S3 5.910 3 9.5 5.910 16 9.5 16c1.610 0 3.090-.59 4.230-1.570l.27.28v.79l5 4.990L20.490 19l-4.990-5zm-6 0C7.010 14 5 11.990 5 9.5S7.010 5 9.5 5 14 7.010 14 9.5 11.990 14 9.5 14z"/></svg>
<span class="t" style="left:726.48px;top:850px;font-size:14px;line-height:14px;color:#212121;transform:scaleX(1.0431);transform-origin:0 0;-webkit-text-stroke:0.2px #212121;">libcrypto3</span>
<span class="t" style="left:827.30px;top:850px;font-size:14px;line-height:14px;color:#212121;transform:scaleX(0.9780);transform-origin:0 0;-webkit-text-stroke:0.2px #212121;">double free after calling PEM_read_bio_ex</span>
<span class="t" style="left:1363.10px;top:850px;font-size:14px;line-height:14px;color:#212121;transform:scaleX(0.9634);transform-origin:0 0;-webkit-text-stroke:0.2px #212121;">3.0.7-r2</span>
<div class="b" style="left:1458px;top:848px;width:18px;height:18px;background:#283593;border-radius:2px;"></div>
<svg class="b" style="left:1458px;top:848px;" width="18" height="18" viewBox="0 0 18 18"><path d="M3.300 9.600 L7.100 13.400 L15.200 4.900" stroke="#fff" stroke-width="2" fill="none"/></svg>
<span class="t" style="left:1487.40px;top:850px;font-size:14px;line-height:14px;color:#212121;transform:scaleX(0.9892);transform-origin:0 0;-webkit-text-stroke:0.2px #212121;">(3.0.8-r0)</span>
<div class="b" style="left:1613px;top:839px;width:80px;height:36px;background:#283593;border-radius:4px;box-shadow:0 3px 1px -2px rgba(0,0,0,.2),0 2px 2px 0 rgba(0,0,0,.14),0 1px 5px 0 rgba(0,0,0,.12);"></div>
<span class="t" style="left:1631.03px;top:849px;font-size:15px;line-height:15px;color:#fff;font-weight:700;transform:scaleX(0.8814);transform-origin:0 0;">Details</span>
<div class="b" style="left:1700px;top:839px;width:155px;height:36px;background:#0277bd;border-radius:4px;box-shadow:0 3px 1px -2px rgba(0,0,0,.2),0 2px 2px 0 rgba(0,0,0,.14),0 1px 5px 0 rgba(0,0,0,.12);"></div>
<span class="t" style="left:1718.48px;top:849px;font-size:15px;line-height:15px;color:#fff;font-weight:700;transform:scaleX(0.8701);transform-origin:0 0;">Request Exception</span>
<div class="b" style="left:226px;top:882px;width:1651px;height:1px;background:#e0e0e0;"></div>
<span class="t" style="left:250.30px;top:902px;font-size:14px;line-height:14px;color:#212121;transform:scaleX(0.9624);transform-origin:0 0;-webkit-text-stroke:0.2px #212121;">Trivy</span>
<div class="b" style="left:337px;top:900px;width:18px;height:18px;border:2px solid #767676;border-radius:2px;background:#fff;"></div>
<svg class="b" style="left:366px;top:897px;" width="24" height="24" viewBox="0 0 24 24"><path fill="#1c1c1c" d="M12 2C6.48 2 2 6.48 2 12s4.48 10 10 10 10-4.48 10-10S17.52 2 12 2zm1 15h-2v-6h2v6zm0-8h-2V7h2v2z"/></svg>
<span class="t" style="left:426.66px;top:902px;font-size:14px;line-height:14px;color:#212121;transform:scaleX(0.9977);transform-origin:0 0;-webkit-text-stroke:0.2px #212121;">High</span>
<span class="t" style="left:527.30px;top:902px;font-size:14px;line-height:14px;color:#0000ee;transform:scaleX(0.9580);transform-origin:0 0;-webkit-text-stroke:0.2px #0000ee;">CVE-2023-0215</span>
<div class="b" style="left:527px;top:915px;width:96.5px;height:1px;background:#0000ee;"></div>
<svg class="b" style="left:652.3px;top:897px;" width="24" height="24" viewBox="0 0 24 24"><path fill="#1c1c1c" d="M15.5 14h-.79l-.28-.27C15.41 12.59 16 11.11 16 9.5 16 5.91 13.09 3 9.5 3S3 5.910 3 9.5 5.910 16 9.5 16c1.610 0 3.090-.59 4.230-1.570l.27.28v.79l5 4.990L20.490 19l-4.990-5zm-6 0C7.010 14 5 11.990 5 9.5S7.010 5 9.5 5 14 7.010 14 9.5 11.990 14 9.5 14z"/></svg>
<span class="t" style="left:726.48px;top:902px;font-size:14px;line-height:14px;color:#212121;transform:scaleX(1.0431);transform-origin:0 0;-webkit-text-stroke:0.2px #212121;">libcrypto3</span>
<span class="t" style="left:827.30px;top:902px;font-size:14px;line-height:14px;color:#212121;transform:scaleX(0.9700);transform-origin:0 0;-webkit-text-stroke:0.2px #212121;">use-after-free following BIO_new_NDEF</span>
<span class="t" style="left:1363.10px;top:902px;font-size:14px;line-height:14px;color:#212121;transform:scaleX(0.9634);transform-origin:0 0;-webkit-text-stroke:0.2px #212121;">3.0.7-r2</span>
<div class="b" style="left:1458px;top:900px;width:18px;height:18px;background:#283593;border-radius:2px;"></div>
<svg class="b" style="left:1458px;top:900px;" width="18" height="18" viewBox="0 0 18 18"><path d="M3.300 9.600 L7.100 13.400 L15.200 4.900" stroke="#fff" stroke-width="2" fill="none"/></svg>
<span class="t" style="left:1487.40px;top:902px;font-size:14px;line-height:14px;color:#212121;transform:scaleX(0.9892);transform-origin:0 0;-webkit-text-stroke:0.2px #212121;">(3.0.8-r0)</span>
<div class="b" style="left:1613px;top:891px;width:80px;height:36px;background:#283593;border-radius:4px;box-shadow:0 3px 1px -2px rgba(0,0,0,.2),0 2px 2px 0 rgba(0,0,0,.14),0 1px 5px 0 rgba(0,0,0,.12);"></div>
<span class="t" style="left:1631.03px;top:901px;font-size:15px;line-height:15px;color:#fff;font-weight:700;transform:scaleX(0.8814);transform-origin:0 0;">Details</span>
<div class="b" style="left:1700px;top:891px;width:155px;height:36px;background:#0277bd;border-radius:4px;box-shadow:0 3px 1px -2px rgba(0,0,0,.2),0 2px 2px 0 rgba(0,0,0,.14),0 1px 5px 0 rgba(0,0,0,.12);"></div>
<span class="t" style="left:1718.48px;top:901px;font-size:15px;line-height:15px;color:#fff;font-weight:700;transform:scaleX(0.8701);transform-origin:0 0;">Request Exception</span>
<div class="b" style="left:226px;top:934px;width:1651px;height:1px;background:#e0e0e0;"></div>
<span class="t" style="left:250.30px;top:954px;font-size:14px;line-height:14px;color:#212121;transform:scaleX(0.9624);transform-origin:0 0;-webkit-text-stroke:0.2px #212121;">Trivy</span>
<div class="b" style="left:337px;top:952px;width:18px;height:18px;border:2px solid #767676;border-radius:2px;background:#fff;"></div>
<svg class="b" style="left:366px;top:949px;" width="24" height="24" viewBox="0 0 24 24"><path fill="#1c1c1c" d="M12 2C6.48 2 2 6.48 2 12s4.48 10 10 10 10-4.48 10-10S17.52 2 12 2zm1 15h-2v-6h2v6zm0-8h-2V7h2v2z"/></svg>
<span class="t" style="left:426.66px;top:954px;font-size:14px;line-height:14px;color:#212121;transform:scaleX(0.9977);transform-origin:0 0;-webkit-text-stroke:0.2px #212121;">High</span>
<span class="t" style="left:527.30px;top:954px;font-size:14px;line-height:14px;color:#0000ee;transform:scaleX(0.9642);transform-origin:0 0;-webkit-text-stroke:0.2px #0000ee;">CVE-2023-0216</span>
<div class="b" style="left:527px;top:967px;width:96.5px;height:1px;background:#0000ee;"></div>
<svg class="b" style="left:652.3px;top:949px;" width="24" height="24" viewBox="0 0 24 24"><path fill="#1c1c1c" d="M15.5 14h-.79l-.28-.27C15.41 12.59 16 11.11 16 9.5 16 5.91 13.09 3 9.5 3S3 5.910 3 9.5 5.910 16 9.5 16c1.610 0 3.090-.59 4.230-1.570l.27.28v.79l5 4.990L20.490 19l-4.990-5zm-6 0C7.010 14 5 11.990 5 9.5S7.010 5 9.5 5 14 7.010 14 9.5 11.990 14 9.5 14z"/></svg>
<span class="t" style="left:726.48px;top:954px;font-size:14px;line-height:14px;color:#212121;transform:scaleX(1.0431);transform-origin:0 0;-webkit-text-stroke:0.2px #212121;">libcrypto3</span>
<span class="t" style="left:827.30px;top:954px;font-size:14px;line-height:14px;color:#212121;transform:scaleX(0.9877);transform-origin:0 0;-webkit-text-stroke:0.2px #212121;">invalid pointer dereference in d2i_PKCS7 functions</span>
<span class="t" style="left:1363.10px;top:954px;font-size:14px;line-height:14px;color:#212121;transform:scaleX(0.9634);transform-origin:0 0;-webkit-text-stroke:0.2px #212121;">3.0.7-r2</span>
<div class="b" style="left:1458px;top:952px;width:18px;height:18px;background:#283593;border-radius:2px;"></div>
<svg class="b" style="left:1458px;top:952px;" width="18" height="18" viewBox="0 0 18 18"><path d="M3.300 9.600 L7.100 13.400 L15.200 4.900" stroke="#fff" stroke-width="2" fill="none"/></svg>
<span class="t" style="left:1487.40px;top:954px;font-size:14px;line-height:14px;color:#212121;transform:scaleX(0.9892);transform-origin:0 0;-webkit-text-stroke:0.2px #212121;">(3.0.8-r0)</span>
<div class="b" style="left:1613px;top:943px;width:80px;height:36px;background:#283593;border-radius:4px;box-shadow:0 3px 1px -2px rgba(0,0,0,.2),0 2px 2px 0 rgba(0,0,0,.14),0 1px 5px 0 rgba(0,0,0,.12);"></div>
<span class="t" style="left:1631.03px;top:953px;font-size:15px;line-height:15px;color:#fff;font-weight:700;transform:scaleX(0.8814);transform-origin:0 0;">Details</span>
<div class="b" style="left:1700px;top:943px;width:155px;height:36px;background:#0277bd;border-radius:4px;box-shadow:0 3px 1px -2px rgba(0,0,0,.2),0 2px 2px 0 rgba(0,0,0,.14),0 1px 5px 0 rgba(0,0,0,.12);"></div>
<span class="t" style="left:1718.48px;top:953px;font-size:15px;line-height:15px;color:#fff;font-weight:700;transform:scaleX(0.8701);transform-origin:0 0;">Request Exception</span>
<div class="b" style="left:226px;top:986px;width:1651px;height:1px;background:#e0e0e0;"></div>
<span class="t" style="left:250.30px;top:1006px;font-size:14px;line-height:14px;color:#212121;transform:scaleX(0.9624);transform-origin:0 0;-webkit-text-stroke:0.2px #212121;">Trivy</span>
<div class="b" style="left:337px;top:1004px;width:18px;height:18px;border:2px solid #767676;border-radius:2px;background:#fff;"></div>
<svg class="b" style="left:366px;top:1001px;" width="24" height="24" viewBox="0 0 24 24"><path fill="#1c1c1c" d="M12 2C6.48 2 2 6.48 2 12s4.48 10 10 10 10-4.48 10-10S17.52 2 12 2zm1 15h-2v-6h2v6zm0-8h-2V7h2v2z"/></svg>
<span class="t" style="left:426.66px;top:1006px;font-size:14px;line-height:14px;color:#212121;transform:scaleX(0.9977);transform-origin:0 0;-webkit-text-stroke:0.2px #212121;">High</span>
<span class="t" style="left:527.30px;top:1006px;font-size:14px;line-height:14px;color:#0000ee;transform:scaleX(0.9646);transform-origin:0 0;-webkit-text-stroke:0.2px #0000ee;">CVE-2023-0217</span>
<div class="b" style="left:527px;top:1019px;width:96.5px;height:1px;background:#0000ee;"></div>
<svg class="b" style="left:652.3px;top:1001px;" width="24" height="24" viewBox="0 0 24 24"><path fill="#1c1c1c" d="M15.5 14h-.79l-.28-.27C15.41 12.59 16 11.11 16 9.5 16 5.91 13.09 3 9.5 3S3 5.910 3 9.5 5.910 16 9.5 16c1.610 0 3.090-.59 4.230-1.570l.27.28v.79l5 4.990L20.490 19l-4.990-5zm-6 0C7.010 14 5 11.990 5 9.5S7.010 5 9.5 5 14 7.010 14 9.5 11.990 14 9.5 14z"/></svg>
<span class="t" style="left:726.48px;top:1006px;font-size:14px;line-height:14px;color:#212121;transform:scaleX(1.0431);transform-origin:0 0;-webkit-text-stroke:0.2px #212121;">libcrypto3</span>
<span class="t" style="left:827.30px;top:1006px;font-size:14px;line-height:14px;color:#212121;transform:scaleX(0.9811);transform-origin:0 0;-webkit-text-stroke:0.2px #212121;">NULL dereference validating DSA public key</span>
<span class="t" style="left:1363.10px;top:1006px;font-size:14px;line-height:14px;color:#212121;transform:scaleX(0.9634);transform-origin:0 0;-webkit-text-stroke:0.2px #212121;">3.0.7-r2</span>
<div class="b" style="left:1458px;top:1004px;width:18px;height:18px;background:#283593;border-radius:2px;"></div>
<svg class="b" style="left:1458px;top:1004px;" width="18" height="18" viewBox="0 0 18 18"><path d="M3.300 9.600 L7.100 13.400 L15.200 4.900" stroke="#fff" stroke-width="2" fill="none"/></svg>
<span class="t" style="left:1487.40px;top:1006px;font-size:14px;line-height:14px;color:#212121;transform:scaleX(0.9892);transform-origin:0 0;-webkit-text-stroke:0.2px #212121;">(3.0.8-r0)</span>
<div class="b" style="left:1613px;top:995px;width:80px;height:36px;background:#283593;border-radius:4px;box-shadow:0 3px 1px -2px rgba(0,0,0,.2),0 2px 2px 0 rgba(0,0,0,.14),0 1px 5px 0 rgba(0,0,0,.12);"></div>
<span class="t" style="left:1631.03px;top:1005px;font-size:15px;line-height:15px;color:#fff;font-weight:700;transform:scaleX(0.8814);transform-origin:0 0;">Details</span>
<div class="b" style="left:1700px;top:995px;width:155px;height:36px;background:#0277bd;border-radius:4px;box-shadow:0 3px 1px -2px rgba(0,0,0,.2),0 2px 2px 0 rgba(0,0,0,.14),0 1px 5px 0 rgba(0,0,0,.12);"></div>
<span class="t" style="left:1718.48px;top:1005px;font-size:15px;line-height:15px;color:#fff;font-weight:700;transform:scaleX(0.8701);transform-origin:0 0;">Request Exception</span>
<div class="b" style="left:226px;top:1038px;width:1651px;height:1px;background:#e0e0e0;"></div>
<span class="t" style="left:250.30px;top:1058px;font-size:14px;line-height:14px;color:#212121;transform:scaleX(0.9624);transform-origin:0 0;-webkit-text-stroke:0.2px #212121;">Trivy</span>
<div class="b" style="left:337px;top:1056px;width:18px;height:18px;border:2px solid #767676;border-radius:2px;background:#fff;"></div>
<svg class="b" style="left:366px;top:1053px;" width="24" height="24" viewBox="0 0 24 24"><path fill="#1c1c1c" d="M12 2C6.48 2 2 6.48 2 12s4.48 10 10 10 10-4.48 10-10S17.52 2 12 2zm1 15h-2v-6h2v6zm0-8h-2V7h2v2z"/></svg>
<span class="t" style="left:426.66px;top:1058px;font-size:14px;line-height:14px;color:#212121;transform:scaleX(0.9977);transform-origin:0 0;-webkit-text-stroke:0.2px #212121;">High</span>
<span class="t" style="left:527.30px;top:1058px;font-size:14px;line-height:14px;color:#0000ee;transform:scaleX(0.9642);transform-origin:0 0;-webkit-text-stroke:0.2px #0000ee;">CVE-2023-0286</span>
<div class="b" style="left:527px;top:1071px;width:96.5px;height:1px;background:#0000ee;"></div>
<svg class="b" style="left:652.3px;top:1053px;" width="24" height="24" viewBox="0 0 24 24"><path fill="#1c1c1c" d="M15.5 14h-.79l-.28-.27C15.41 12.59 16 11.11 16 9.5 16 5.91 13.09 3 9.5 3S3 5.910 3 9.5 5.910 16 9.5 16c1.610 0 3.090-.59 4.230-1.570l.27.28v.79l5 4.990L20.490 19l-4.990-5zm-6 0C7.010 14 5 11.990 5 9.5S7.010 5 9.5 5 14 7.010 14 9.5 11.990 14 9.5 14z"/></svg>
<span class="t" style="left:726.48px;top:1058px;font-size:14px;line-height:14px;color:#212121;transform:scaleX(1.0431);transform-origin:0 0;-webkit-text-stroke:0.2px #212121;">libcrypto3</span>
<span class="t" style="left:827.30px;top:1058px;font-size:14px;line-height:14px;color:#212121;transform:scaleX(0.9890);transform-origin:0 0;-webkit-text-stroke:0.2px #212121;">X.400 address type confusion in X.509 GeneralName</span>
<span class="t" style="left:1363.10px;top:1058px;font-size:14px;line-height:14px;color:#212121;transform:scaleX(0.9634);transform-origin:0 0;-webkit-text-stroke:0.2px #212121;">3.0.7-r2</span>
<div class="b" style="left:1458px;top:1056px;width:18px;height:18px;background:#283593;border-radius:2px;"></div>
<svg class="b" style="left:1458px;top:1056px;" width="18" height="18" viewBox="0 0 18 18"><path d="M3.300 9.600 L7.100 13.400 L15.200 4.900" stroke="#fff" stroke-width="2" fill="none"/></svg>
<span class="t" style="left:1487.40px;top:1058px;font-size:14px;line-height:14px;color:#212121;transform:scaleX(0.9892);transform-origin:0 0;-webkit-text-stroke:0.2px #212121;">(3.0.8-r0)</span>
<div class="b" style="left:1613px;top:1047px;width:80px;height:36px;background:#283593;border-radius:4px;box-shadow:0 3px 1px -2px rgba(0,0,0,.2),0 2px 2px 0 rgba(0,0,0,.14),0 1px 5px 0 rgba(0,0,0,.12);"></div>
<span class="t" style="left:1631.03px;top:1057px;font-size:15px;line-height:15px;color:#fff;font-weight:700;transform:scaleX(0.8814);transform-origin:0 0;">Details</span>
<div class="b" style="left:1700px;top:1047px;width:155px;height:36px;background:#0277bd;border-radius:4px;box-shadow:0 3px 1px -2px rgba(0,0,0,.2),0 2px 2px 0 rgba(0,0,0,.14),0 1px 5px 0 rgba(0,0,0,.12);"></div>
<span class="t" style="left:1718.48px;top:1057px;font-size:15px;line-height:15px;color:#fff;font-weight:700;transform:scaleX(0.8701);transform-origin:0 0;">Request Exception</span>
<div class="b" style="left:0px;top:1077px;width:1920px;height:3px;background:#f9b56d;"></div>
<div class="b" style="left:0px;top:1078px;width:2px;height:2px;background:#efe6dc;border-radius:0 2px 0 0;"></div>
<div class="b" style="left:1918px;top:1078px;width:2px;height:2px;background:#efe6dc;border-radius:2px 0 0 0;"></div>
</body></html>
